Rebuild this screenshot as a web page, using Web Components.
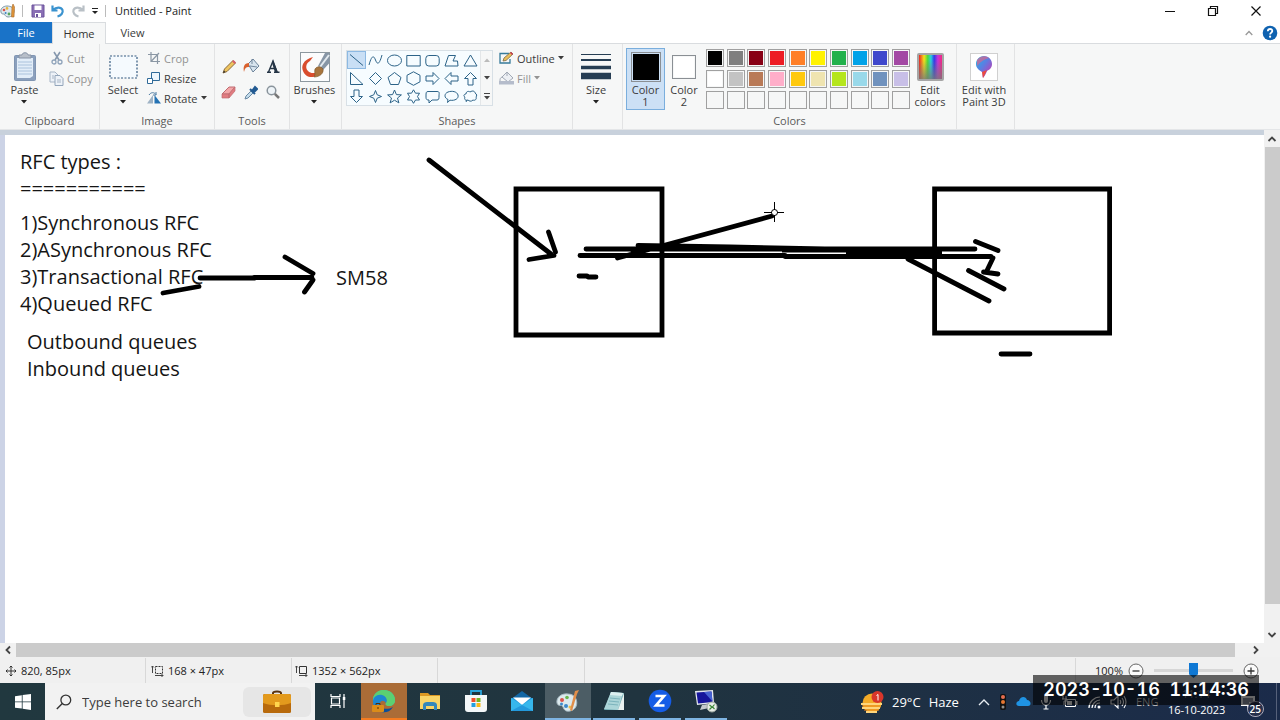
<!DOCTYPE html>
<html lang="en">
<head>
<meta charset="utf-8">
<title>Untitled - Paint</title>
<style>
html,body{margin:0;height:100%}
body{font-family:"Open Sans","Noto Sans",sans-serif;font-size:11px;color:#3b3b3b;overflow:hidden}
</style>
</head>
<body>
<paint-desktop></paint-desktop>
<script>
const ICONS = {
  palette:[16,16,`<path d="M7 3C3 3 0 6 1 9c0 2 2 2 3 2s1 3 4 3c4 0 6-3 6-6S11 3 7 3z" fill="#dfe9ee" stroke="#7f99a6"/><circle cx="4" cy="7" r="1.3" fill="#d9534a"/><circle cx="7" cy="5.4" r="1.3" fill="#e7b63a"/><circle cx="9" cy="11" r="1.4" fill="#5aa65a"/><circle cx="5.6" cy="10" r="1" fill="#3c82c4"/><path d="M13 1l1.500 3-.5 10h-2.500L12 4z" fill="#e0953a" stroke="#a8692a" stroke-width=".6"/>`],
  save:[14,14,`<path d="M1 1h12v12H1z" fill="#8a6fb5" stroke="#6b529b"/><path d="M3.500 1.500h7v4.500h-7z" fill="#fff"/><path d="M4 9h6v4H4z" fill="#fff"/><path d="M5 10h2v3H5z" fill="#6b529b"/>`],
  undo:[14,14,`<path d="M1.500 1.500v5h5M2 6c3-3 8-3.500 9.500 0 1 3-1.500 5.500-5 6.500" fill="none" stroke="#3b93cf" stroke-width="2.200"/>`],
  redo:[14,14,`<path d="M12.500 1.500v5h-5M12 6C9 3 4 2.500 2.500 6c-1 3 1.500 5.500 5 6.500" fill="none" stroke="#b9c0c6" stroke-width="2.200"/>`],
  qat:[8,8,`<path d="M1 1.500h6" stroke="#222"/><path d="M1 4h6L4 7z" fill="#222"/>`],
  caret:[6,4,`<path d="M0 0h6L3 3.500z" fill="currentColor"/>`],
  min:[12,12,`<path d="M1 6.500h10" stroke="#111"/>`],
  restore:[12,12,`<path d="M1.500 3.500h7v7h-7zM3.500 3.500v-2h7v7h-2" fill="none" stroke="#111" stroke-width="1.200"/>`],
  close:[12,12,`<path d="M1.500 1.500l9 9M10.500 1.500l-9 9" stroke="#111" stroke-width="1.200"/>`],
  up:[8,6,`<path d="M.7 5L4 1.500 7.300 5" fill="none" stroke="currentColor" stroke-width="1.300"/>`],
  help:[16,16,`<circle cx="8" cy="8" r="7.300" fill="#0f62b0"/><path d="M5.800 6.200C6 3.200 10.400 3.400 10.300 6c0 1.500-2.200 1.700-2.200 3.500" fill="none" stroke="#fff" stroke-width="1.800"/><circle cx="8.100" cy="11.700" r="1.100" fill="#fff"/>`],
  paste:[24,30,`<rect x="1.500" y="3.500" width="21" height="25" rx="1" fill="#8ba0bd" stroke="#8095b2"/><path d="M4 6h16v18l-3 2H4z" fill="#e2edf8"/><path d="M5 10h14M5 13h14M5 16h14M5 19h14M5 22h14" stroke="#aac2dc"/><path d="M6 6V3h3c0-3 6-3 6 0h3v3z" fill="#b8bfc9" stroke="#8793a5"/>`],
  cut:[12,14,`<path d="M3 1l5 8M9 1L4 9" stroke="#8698ae" stroke-width="1.600"/><circle cx="3" cy="11" r="2" fill="none" stroke="#8fa3ba" stroke-width="1.300"/><circle cx="9" cy="11" r="2" fill="none" stroke="#8fa3ba" stroke-width="1.300"/>`],
  copy:[15,15,`<path d="M1 1h5l3 3v7H1z" fill="#edf2f8" stroke="#a7b5c6"/><path d="M6 4.500h5l3 3v7H6z" fill="#edf2f8" stroke="#94a6bb"/><path d="M3 5h2M3 7h2M8 9h4M8 11h4" stroke="#a7b5c6"/>`],
  select:[29,24,`<rect x="1" y="1" width="27" height="22" fill="#f5fafe" stroke="#345a80" stroke-width="1.200" stroke-dasharray="2 1.500"/>`],
  crop:[12,12,`<path d="M3 0v9.500h9M0 2.500h9.500V12M3.500 9L11 1" fill="none" stroke="#8b97a4" stroke-width="1.200"/>`],
  resize:[13,12,`<path d="M4.500.5h8v8h-8z" fill="#eef6fc" stroke="#2f6a98"/><path d="M.5 6.500h5v5h-5z" fill="#fff" stroke="#2f6a98"/>`],
  rotate:[14,12,`<path d="M0 11.500h6V3z" fill="#9fb3c5"/><path d="M7.500 3v8.500H14z" fill="#2573b4"/><path d="M2 3c2-3 5-3 7-.5M9 0v3H6" fill="none" stroke="#4c7ba2"/>`],
  pencil:[15,15,`<path d="M1 14l1.500-4L11 1.500 13.500 4 5 12.500z" fill="#eec45f" stroke="#8a6a3a"/><path d="M10 2.500L12.500 5 14 3.500 11.500 1z" fill="#d4606a"/><path d="M1 14l1-2.500L3.500 13z" fill="#333"/>`],
  bucket:[17,16,`<path d="M5 6l5-5 6 7-6 6z" fill="#d7e4ee" stroke="#6a8199"/><path d="M9 6V1M7 8l7 1" stroke="#74899e"/><path d="M6 5C1 5 0 9 1 14c1-4 2-5 5-5z" fill="#d9622f"/>`],
  textA:[14,14,`<path d="M1 13.300h4M8 13.300h5.500M2.500 13L7 2l4 11M4.500 9.500h5" fill="none" stroke="#253546" stroke-width="1.400"/><path d="M7 1l5 12.500H9L6 4z" fill="#253546"/>`],
  eraser:[16,14,`<path d="M1 9l7-7h6l-6 7z" fill="#f3a7a9" stroke="#bf6b70"/><path d="M1 9h7v4H1zM8 9l6-7v4l-6 7z" fill="#e17b80" stroke="#bf6b70" stroke-width=".7"/>`],
  picker:[14,15,`<path d="M1 14l1-3 5-5 2 2-5 5z" fill="#c4ddec" stroke="#6988a3"/><path d="M6 4l5 5M8 6l3-4 2 2-3.500 3.500z" fill="#225a92" stroke="#225a92" stroke-width="2"/>`],
  magnify:[14,14,`<circle cx="5.500" cy="5.500" r="4.300" fill="#eef4f8" stroke="#8a949c" stroke-width="1.500"/><path d="M8.800 8.800L13 13" stroke="#777" stroke-width="2.500"/>`],
  brush:[30,30,`<rect x=".5" y=".5" width="29" height="29" fill="#fbfcfd" stroke="#8d989f"/><path d="M3 12C5 8 9 6 13 5l-3 4c-4 2-5 7-2 10 3 3 7 2 9 1l1 3c-6 4-13 2-15-4-1-2-1-5 0-7z" fill="#d94d2e"/><path d="M29.500 2v9l-6.500 7-5-4L25 1h4z" fill="#8796a6"/><path d="M29 3L20 15" stroke="#e3eaef" stroke-width="2"/><path d="M15 17c2-3 6-3 8 0 1 4-3 8-9 8 2-3 0-5 1-8z" fill="#a8753e" stroke="#795428" stroke-width=".6"/>`],
  outline:[15,14,`<path d="M10 2.500H1V12h10V8" fill="none" stroke="#377b9b" stroke-width="1.300"/><path d="M4 10l1-3 7-6 2 2-7 6.500z" fill="#e8bf5b" stroke="#7d6844" stroke-width=".8"/><path d="M11 2l2 2 1-1-2-2z" fill="#c35"/>`],
  fill:[15,14,`<path d="M3 6l5-5 6 6-5 4z" fill="#edf0f4" stroke="#a1a9b5"/><path d="M8 5V1M3 6C1 7 1 8 1 10" stroke="#a1a9b5" fill="none"/><path d="M0 10h15v3.500H0z" fill="#b5bccb"/>`],
  size:[30,28,`<path d="M0 1.500h30" stroke="#263d53"/><path d="M0 7h30" stroke="#263d53" stroke-width="2"/><path d="M0 14.500h30" stroke="#263d53" stroke-width="3.500"/><path d="M0 23h30" stroke="#263d53" stroke-width="6.500"/>`],
  p3d:[28,28,`<defs><linearGradient id="g" x2="1" y2="1"><stop stop-color="#22b7e5"/><stop offset=".45" stop-color="#5c7de2"/><stop offset=".7" stop-color="#9a55c6"/><stop offset="1" stop-color="#ef4a5d"/></linearGradient></defs><rect x=".5" y=".5" width="27" height="27" fill="#fff" stroke="#d0d0d0"/><path d="M14 3c5 0 8 4 8 8s-3 6-5 7c-1 2-2 5-4 7-1-2 0-4-1-6-3-2-6-4-6-8s3-8 8-8z" fill="url(#g)"/><path d="M7 7c3-4 8-5 12-2-4 1-8 3-12 8z" fill="#e86087" opacity=".65"/><path d="M12 19l5-2-4 8z" fill="#ed4b3f"/>`],
  line:[15,15,`<path d="M1 1.500l13 11"/>`],
  curve:[15,15,`<path d="M1 12C4 1 6 3 7.500 7S11 13 14 2"/>`],
  oval:[15,15,`<ellipse cx="7.500" cy="7.500" rx="7" ry="5.500"/>`],
  rect:[15,15,`<path d="M.8 2.500h13.400v10.500H.8z"/>`],
  round:[15,15,`<rect x=".8" y="2.500" width="13.400" height="10.500" rx="3"/>`],
  poly:[15,15,`<path d="M1 13L4.500 2.500h7L9 8h4.500l.5 5z"/>`],
  tri:[15,15,`<path d="M7.500 2L14 13H1z"/>`],
  rtri:[15,15,`<path d="M1.500 1.500V13.500H14z"/>`],
  diamond:[15,15,`<path d="M7.500 1.500l6 6-6 6-6-6z"/>`],
  penta:[15,15,`<path d="M7.500 1.500l6.500 5-2.500 7h-8L1 6.500z"/>`],
  hexa:[15,15,`<path d="M7.500.8l6.500 3.500v6.500l-6.500 3.500L1 10.800V4.300z"/>`],
  arR:[15,15,`<path d="M1 5h7V1.500l6 6-6 6V10H1z"/>`],
  arL:[15,15,`<path d="M14 5H7V1.500l-6 6 6 6V10h7z"/>`],
  arU:[15,15,`<path d="M5 14V7.500H1.500l6-6 6 6H10V14z"/>`],
  arD:[15,15,`<path d="M5 1v6.500H1.500l6 6 6-6H10V1z"/>`],
  star4:[15,15,`<path d="M7.500 1.500L9.200 5.800l4.300 1.700-4.300 1.700-1.700 4.300-1.700-4.300-4.300-1.700 4.300-1.700z"/>`],
  star5:[15,15,`<path d="M7.500 1l1.900 4.600 5 .3-3.900 3.100 1.400 4.900-4.400-2.700-4.400 2.700L4.500 9 .6 5.900l5-.3z"/>`],
  star6:[15,15,`<path d="M7.500.8l2 3.400h4l-2 3.400 2 3.400h-4l-2 3.300-2-3.300h-4l2-3.400-2-3.400h4z"/>`],
  callR:[15,15,`<path d="M3 2.500h9c3 0 2 2 2 4.500s0 4-2 4H7l-3 3v-3C1 11 1 10 1 7s0-4.500 2-4.500z"/>`],
  callO:[15,15,`<path d="M4 10.500C0 9 0 4.500 4 3s9-.5 10 3-3 6-8 5.200L3.500 13.500z"/>`],
  cloud:[15,15,`<path d="M3 5c0-3 3-3 4-2 3-2 5-.5 5 1 2 1 2 3 1 4 1 2-1 4-3 3-2 2-4 1-5 0-3 1-4-1-3-3-2-1-1-3 1-3zM4 11l-1 2"/>`],
  more:[8,9,`<path d="M1 1.500h6" stroke="#444"/><path d="M1 4h6L4 7.500z" fill="#444"/>`],
  move:[12,12,`<path d="M6 1v10M1 6h10M4.500 2.500L6 1l1.500 1.500M4.500 9.500L6 11l1.500-1.500M2.500 4.500L1 6l1.500 1.500M9.500 4.500L11 6 9.500 7.500" fill="none" stroke="#333"/>`],
  selsize:[13,12,`<path d="M1.500 1v7M0 2.500L1.500 1 3 2.500" fill="none" stroke="#444"/><path d="M4.500 1.500h7v7h-7z" fill="none" stroke="#333" stroke-dasharray="2 1"/><path d="M4 10.500h8M10.500 9l1.500 1.500-1.500 1.500" fill="none" stroke="#444"/>`],
  imgsize:[13,12,`<path d="M1.500 1v7M0 2.500L1.500 1 3 2.500" fill="none" stroke="#444"/><path d="M4.500 1.500h7v7h-7z" fill="none" stroke="#333"/><path d="M4 10.500h8M10.500 9l1.500 1.500-1.500 1.500" fill="none" stroke="#444"/>`],
  minus:[16,16,`<circle cx="8" cy="8" r="7" fill="#fafafa" stroke="#666"/><path d="M4.500 8h7" stroke="#333" stroke-width="1.300"/>`],
  plus:[16,16,`<circle cx="8" cy="8" r="7" fill="#fafafa" stroke="#666"/><path d="M4.500 8h7M8 4.500v7" stroke="#333" stroke-width="1.300"/>`],
  win:[16,16,`<path d="M0 2.200l6.800-1v6.300H0zM7.600 1.100L16 0v7.500H7.600zM0 8.300h6.800v6.300L0 13.700zM7.600 8.300H16V16l-8.400-1.200z" fill="#fff"/>`],
  search:[16,16,`<circle cx="9.800" cy="6" r="4.900" fill="none" stroke="#333" stroke-width="1.300"/><path d="M6.300 9.500L.8 15" stroke="#333" stroke-width="1.400"/>`],
  brief:[30,24,`<path d="M11 6V3c0-2 8-2 8 0v3" fill="none" stroke="#5a3310" stroke-width="2"/><rect x="1" y="4" width="28" height="19" rx="1.500" fill="#b86a0c"/><path d="M1 5.500Q1 4 3 4h24q2 0 2 1.500V13c-8 3-20 3-28 0z" fill="#e39a1d"/><path d="M13 12h4.500v5H13z" fill="#ffd54d"/>`],
  taskview:[18,16,`<path d="M2 1v2.500h9V1M2 15v-2.500h9V15M2.500 5h8v6h-8zM15 1v14" fill="none" stroke="#fff" stroke-width="1.200"/><path d="M13.800 4h2.500v3h-2.500z" fill="#fff"/>`],
  edge:[24,24,`<path d="M1 13C0 5 6 1 12 1s11 4 11 10c0 4-3 6-6 6s-4-2-3-3c2-3 0-7-4-7S2 9 1 13z" fill="#3cc3b4"/><path d="M1 9C4 1 10 0 15 1.500 20 3 23 7 23 11c0 4-3 6-6 6s-4-2-3-3C17 8 9 4 1 9z" fill="#5bd072"/><path d="M1 13c0-5 4-8 9-7 4 1 6 5 4 8-2-3-5-3-6 0-1 4 3 7 5 9C6 24 1 19 1 13z" fill="#1d87d2"/><path d="M8 14c-1 5 6 8 13 4-3 5-8 6-11 5s-3-6-2-9z" fill="#0c4f9b"/><rect x="0" y="16" width="12" height="7" rx="1" fill="#db8c19"/><path d="M4 16v-1.500h4V16M5 19h2" stroke="#563006" fill="none"/>`],
  folder:[22,20,`<path d="M1 2h8l2 2h10v4H1z" fill="#dc9822"/><path d="M1 5h20v13H1z" fill="#f9d467"/><path d="M4 19v-5c0-2 2-3 4-3h6c2 0 4 1 4 3v5h-3v-4H7v4z" fill="#3387bb"/>`],
  store:[24,24,`<path d="M7 6V2h10v4" fill="none" stroke="#28a4db" stroke-width="1.800"/><path d="M1 6h22v14q0 3-3 3H4q-3 0-3-3z" fill="#f3f7f8"/><path d="M7.500 9h4v4h-4z" fill="#f04e28"/><path d="M12.500 9h4v4h-4z" fill="#72b522"/><path d="M7.500 14h4v4h-4z" fill="#239fdf"/><path d="M12.500 14h4v4h-4z" fill="#f9b915"/>`],
  mail:[24,22,`<path d="M1 9l11-8 11 8z" fill="#1267a5"/><path d="M1 8h22v13H1z" fill="#2399dc"/><path d="M3 7.500h18L12 15z" fill="#fff"/><path d="M1 8l11 7L1 21zM23 8l-11 7 11 6z" fill="#36b7ec"/>`],
  paintbig:[24,24,`<path d="M12 5C5 4 0 9 1 14c1 4 5 1 6 4s3 5 7 4c6-1 8-7 6-12-1-3-4-5-8-5z" fill="#dce9ed" stroke="#a5b8c0"/><circle cx="6" cy="11" r="2" fill="#d9534a"/><circle cx="11" cy="8.500" r="1.800" fill="#69b64e"/><circle cx="5.500" cy="15" r="1.500" fill="#3b89ca"/><circle cx="10" cy="17" r="2" fill="#3b89ca"/><circle cx="14" cy="18" r="1.500" fill="#edbe44"/><path d="M19 2l4-1-2 4-5 17-2-1z" fill="#e18e4a"/>`],
  notepad:[24,24,`<path d="M9 3l13 1v17L2 21z" fill="#6ca7b0"/><path d="M9 3l12 1-5 17L2 20z" fill="#abd5d8"/><path d="M9 3l12 1-1 3L8 6z" fill="#dceff0"/><path d="M8 9l10 1M7 12l10 1M6 15l10 1" stroke="#7bb3bc"/><path d="M16 21l6-17v17z" fill="#eaf1ef"/>`],
  zoom:[24,24,`<circle cx="12" cy="12" r="11.300" fill="#155ce6"/><path d="M7.500 7h8.500L8 16.500h8.500" fill="none" stroke="#fff" stroke-width="2.700"/>`],
  remote:[24,24,`<path d="M1 2l18-1 1 13-17 2z" fill="#e4e7ed"/><path d="M2.500 3.500L17.500 2.500l1 10.500-14.500 1.500z" fill="#16159b"/><path d="M10 3l7.500-.5 1 10z" fill="#4662d2"/><path d="M8 16l6-1 1 4-9 2z" fill="#c5c9ce"/><circle cx="18" cy="18" r="5" fill="#e9ede8" stroke="#a0a9a1"/><path d="M15.500 16l2.500 2-2.500 2.500M20.500 15.500L18.500 18l2 2" fill="none" stroke="#3c8736" stroke-width="1.200"/>`],
  haze:[24,24,`<circle cx="12" cy="13" r="9.500" fill="#f4ab27"/><path d="M1 14h21M2 18h18M6 22h11" stroke="#ffd57b" stroke-width="2"/><path d="M2 16h18M4 20h15" stroke="#e98920"/><circle cx="17.500" cy="7" r="6" fill="#d9362b"/><path d="M16.500 5.500l1.500-1v6" stroke="#fff" fill="none"/>`],
  chev:[12,8,`<path d="M1 7l5-5 5 5" fill="none" stroke="#e8edf2" stroke-width="1.400"/>`],
  traffic:[8,16,`<rect x="1" y="0" width="6" height="16" rx="2" fill="#111"/><circle cx="4" cy="3" r="2" fill="#e56d4f"/><circle cx="4" cy="8" r="2" fill="#e47732"/><circle cx="4" cy="13" r="1.500" fill="#8c8f90"/>`],
  cloudod:[15,11,`<path d="M3 10C-1 10 0 5 3 5c1-5 7-5 8-1 4 0 5 6 1 6z" fill="#1f93e4"/>`],
  mic:[12,16,`<rect x="4" y="0" width="4" height="9" rx="2" fill="#fff"/><path d="M1.500 6c0 7 9 7 9 0M6 11v4M3.500 15h5" fill="none" stroke="#fff" stroke-width="1.200"/>`],
  battery:[16,12,`<path d="M3.500 3.500h10v7h-10z" fill="none" stroke="#fff"/><path d="M5 5h5v4H5zM14 5h1.500v4H14z" fill="#fff"/><path d="M1 0v3M4 0v3M0 3h5v2H2v4" stroke="#fff" fill="none"/>`],
  wifi:[14,14,`<path d="M2 13C2 7 7 2 13 2M5 13c0-4 4-8 8-8M8 13c0-3 2-5 5-5" fill="none" stroke="#fff" stroke-width="1.200"/><circle cx="12" cy="12" r="1.500" fill="#fff"/>`],
  speaker:[17,14,`<path d="M1 5h3l4-4v12L4 9H1zM10 5q1.500 2 0 4M12 3q3 4 0 8M14 1q4 6 0 12" fill="none" stroke="#fff" stroke-width="1.100"/>`],
  note:[16,14,`<path d="M1 1h14v10h-5l-3 3v-3H1z" fill="#fff"/><path d="M3 4h10M3 6h10M3 8h6" stroke="#2a3550"/>`],
  left:[8,10,`<path d="M6 1.500L2.500 5 6 8.500" fill="none" stroke="#444" stroke-width="1.800"/>`],
  right:[8,10,`<path d="M2 1.500L5.500 5 2 8.500" fill="none" stroke="#444" stroke-width="1.800"/>`],
  sup:[10,8,`<path d="M1.500 6L5 2.500 8.500 6" fill="none" stroke="#444" stroke-width="1.800"/>`],
  sdown:[10,8,`<path d="M1.500 2L5 5.500 8.500 2" fill="none" stroke="#444" stroke-width="1.800"/>`]
};
const BTN = `button{font:inherit;color:inherit;background:none;border:0;padding:0;margin:0}`;
const define = (name, render) => customElements.define(name, class extends HTMLElement {
  constructor(){ super(); this.attachShadow({mode:'open'}); }
  connectedCallback(){ this.shadowRoot.innerHTML = render(this); }
});
const at = (el,n,d='') => el.getAttribute(n) ?? d;

define('ui-icon', el => {
  const [w,h,body] = ICONS[at(el,'name')];
  return `<style>:host{display:block;flex:none;white-space:normal}svg{display:block}</style><svg width="${w}" height="${h}" viewBox="0 0 ${w} ${h}" aria-hidden="true">${body}</svg>`;
});

define('title-bar', () => `<style>${BTN}
:host{display:flex;align-items:center;height:22px;box-sizing:border-box;padding:0 3px 1px 0;background:#fff;color:#222}
.q{display:flex;align-items:center;gap:6px}
.sep{width:1px;height:12px;background:#bbb}
.q button:nth-of-type(1){margin-left:2px}
h1{font-size:11px;font-weight:400;margin:0 auto 0 9px}
.w{display:flex}.w button{width:43px;height:20px;display:grid;place-items:center}
</style>
<div class="q"><ui-icon name="palette"></ui-icon><span class="sep"></span>
<button aria-label="Save"><ui-icon name="save"></ui-icon></button><button aria-label="Undo"><ui-icon name="undo"></ui-icon></button><button aria-label="Redo"><ui-icon name="redo"></ui-icon></button><button aria-label="Customize"><ui-icon name="qat"></ui-icon></button><span class="sep"></span></div>
<h1>Untitled - Paint</h1>
<div class="w"><button aria-label="Minimize"><ui-icon name="min"></ui-icon></button><button aria-label="Restore"><ui-icon name="restore"></ui-icon></button><button aria-label="Close"><ui-icon name="close"></ui-icon></button></div>`);

define('tab-strip', () => `<style>${BTN}
:host{display:flex;height:22px;box-sizing:border-box;background:#fff;border-bottom:1px solid #d9dcdf}
button{width:53px;height:21px;line-height:21px}
.file{background:#1a73c8;color:#fff;width:52px}
.home{height:22px;line-height:20px;background:#f6f7f7;border:solid #d9dcdf;border-width:1px 1px 0;width:54px;color:#333}
.end{margin-left:auto;display:flex;align-items:center;gap:9px;padding-right:2px;color:#999}
.end button{width:auto;height:auto}
</style>
<button class="file">File</button><button class="home">Home</button><button>View</button>
<div class="end"><button aria-label="Collapse ribbon"><ui-icon name="up"></ui-icon></button><button aria-label="Help"><ui-icon name="help"></ui-icon></button></div>`);

define('ribbon-group', el => `<style>
:host{display:grid;grid-template-rows:1fr 16px;box-sizing:border-box;padding-top:4px;border-right:1px solid #e2e3e4}
.c{display:flex;align-items:flex-start}
.l{text-align:center;line-height:16px;color:#5a5a5a}
</style><div class="c"><slot></slot></div><div class="l">${at(el,'label')}</div>`);

define('big-button', el => `<style>${BTN}
:host{display:block;flex:none}
button{width:100%;height:62px;display:grid;grid-template-rows:35px auto;justify-items:center;align-content:start;line-height:12px;border:1px solid transparent;box-sizing:border-box}
:host([active]) button{background:#cce0f5;border-color:#7aaedd}
.i{display:grid;place-items:center;height:35px}
.t{display:flex;flex-direction:column;align-items:center}
:host([wrap]) .t{display:block;width:min-content}
ui-icon{margin-top:4px;color:#222}
.i ui-icon{margin:0}
</style><button><span class="i">${el.hasAttribute('icon')?`<ui-icon name="${at(el,'icon')}"></ui-icon>`:'<slot></slot>'}</span><span class="t">${at(el,'label')}${el.hasAttribute('wrap')?'':'<ui-icon name="caret"></ui-icon>'}</span></button>`);

define('small-button', el => `<style>${BTN}
:host{display:block}
button{height:20px;display:flex;align-items:center;gap:3px;white-space:nowrap}
.i{width:15px;display:grid;place-items:center}
:host([off]) button{color:#939393}
</style><button><span class="i"><ui-icon name="${at(el,'icon')}"></ui-icon></span><span>${at(el,'label')}</span>${el.hasAttribute('menu')?'<ui-icon name="caret"></ui-icon>':''}</button>`);

define('tool-grid', () => `<style>${BTN}
:host{display:grid;grid-template-columns:repeat(3,22px);grid-auto-rows:26px;padding:5px 0 0 3px}
button{display:grid;place-items:center}</style>`
 + [['pencil','Pencil'],['bucket','Fill with color'],['textA','Text'],['eraser','Eraser'],['picker','Color picker'],['magnify','Magnifier']].map(([i,l])=>`<button aria-label="${l}"><ui-icon name="${i}"></ui-icon></button>`).join(''));

define('shape-gallery', () => `<style>${BTN}
:host{display:flex;margin:2px 6px 0 4px;border:1px solid #d8e0e6;background:#f6fcff}
.g{display:grid;grid-template-columns:repeat(7,19px);grid-auto-rows:18px;fill:none;stroke:#2c6388;stroke-width:1px}
.g button{display:grid;place-items:center;box-sizing:border-box}
.g button:first-child{background:#c9dff5;border:1px solid #8db9e2}
.s{display:grid;grid-template-rows:repeat(3,18px);width:11px;background:#f6f7f7;border-left:1px solid #e3e6e8}
.s button{display:grid;place-items:center;color:#444}
.s button:first-child{color:#bbb}.s button:first-child ui-icon{transform:rotate(180deg)}
</style><div class="g">${['line','curve','oval','rect','round','poly','tri','rtri','diamond','penta','hexa','arR','arL','arU','arD','star4','star5','star6','callR','callO','cloud'].map(n=>`<button aria-label="${n}"><ui-icon name="${n}"></ui-icon></button>`).join('')}</div>
<div class="s"><button aria-label="Scroll up"><ui-icon name="caret"></ui-icon></button><button aria-label="Scroll down"><ui-icon name="caret"></ui-icon></button><button aria-label="More shapes"><ui-icon name="more"></ui-icon></button></div>`);

const COLORS = ['#000','#7f7f7f','#880015','#ed1c24','#ff7f27','#fff200','#22b14c','#00a2e8','#3f48cc','#a349a4','#fff','#c3c3c3','#b97a57','#ffaec9','#ffc90e','#efe4b0','#b5e61d','#99d9ea','#7092be','#c8bfe7'];
define('color-palette', () => `<style>${BTN}
:host{display:grid;grid-template-columns:repeat(10,18px);grid-auto-rows:18px;justify-content:space-between;row-gap:3px;width:204px;margin:1px 0 0 3px}
button{border:1px solid #a0a0a0;padding:1px;background-clip:content-box}
</style>` + Array.from({length:30},(_,i)=>`<button aria-label="Palette color ${i+1}" style="background-color:${COLORS[i]||'#f6f7f7'}"></button>`).join(''));

define('color-well', el => `<style>:host{display:block;box-sizing:border-box;border:1px solid #8a8f94;width:${at(el,'size')}px;height:${at(el,'size')}px;padding:1px;background:${at(el,'color')} content-box}</style>`);
define('rainbow-well', () => `<style>:host{display:block;box-sizing:border-box;width:27px;height:28px;border:2px solid #a5a5a5;border-radius:2px;
background:linear-gradient(transparent 20%,#777c),linear-gradient(90deg,#e22 0,#f3e11c 22%,#4bd93b 38%,#2bd0e0 52%,#2f3be8 66%,#c634d9 82%,#f5267c)}</style>`);

define('ribbon-bar', () => `<style>
:host{display:grid;grid-template-columns:100px 115px 75px 52px 231px 50px 334px 58px 1fr;height:86px;background:#f6f7f7;border-bottom:1px solid #e4e6e8;box-sizing:border-box}
.a{width:49px}.b{width:46px}
</style>
<ribbon-group label="Clipboard"><big-button class="a" icon="paste" label="Paste"></big-button><div><small-button off icon="cut" label="Cut"></small-button><small-button off icon="copy" label="Copy"></small-button></div></ribbon-group>
<ribbon-group label="Image"><big-button class="b" icon="select" label="Select"></big-button><div><small-button off icon="crop" label="Crop"></small-button><small-button icon="resize" label="Resize"></small-button><small-button menu icon="rotate" label="Rotate"></small-button></div></ribbon-group>
<ribbon-group label="Tools"><tool-grid></tool-grid></ribbon-group>
<ribbon-group label=""><big-button class="a" icon="brush" label="Brushes"></big-button></ribbon-group>
<ribbon-group label="Shapes"><shape-gallery></shape-gallery><div><small-button menu icon="outline" label="Outline"></small-button><small-button off menu icon="fill" label="Fill"></small-button></div></ribbon-group>
<ribbon-group label=""><big-button class="b" icon="size" label="Size"></big-button></ribbon-group>
<ribbon-group label="Colors"><big-button active wrap label="Color 1" style="width:39px;margin-left:3px"><color-well size="30" color="#000"></color-well></big-button><big-button wrap label="Color 2" style="width:38px"><color-well size="24" color="#fff"></color-well></big-button><color-palette></color-palette><big-button wrap label="Edit colors" style="width:40px"><rainbow-well></rainbow-well></big-button></ribbon-group>
<ribbon-group label=""><big-button wrap icon="p3d" label="Edit&nbsp;with Paint&nbsp;3D" style="width:54px"></big-button></ribbon-group>`);

define('paint-canvas', () => `<style>
:host{display:block;position:relative;overflow:hidden;background:#fff;font:20px/27px "Open Sans","Noto Sans",sans-serif;color:#151515}
p{margin:0;position:absolute;white-space:pre}
svg{position:absolute;inset:0;width:100%;height:100%}
</style>
<p style="left:15px;top:13px">RFC types :
===========</p>
<p style="left:15px;top:74px">1)Synchronous RFC
2)ASynchronous RFC
3)Transactional RFC
4)Queued RFC</p>
<p style="left:22px;top:193px">Outbound queues
Inbound queues</p>
<p style="left:331px;top:129px">SM58</p>
<svg aria-hidden="true"><g transform="translate(-5 -135)" fill="none" stroke="#000" stroke-width="4.800" stroke-linecap="round">
<path d="M200 278H255M254 277.500H312M285 257L313 273.500M313 280L304.500 292M163 293L199 286.500"/>
<path d="M429 160L551 254M548.500 232L555.500 252M554 255.500L529 259.500"/>
<path d="M516 189H662V335H516zM934.600 189H1109.600V333H934.600z" stroke-linecap="butt"/>
<path d="M586 249H975M638 245.500L730 247L850 249.500M580 255.500H785M785 256.500H991M617.500 258L772 216M633 252L650 248"/>
<path d="M782 250.500H942M846 253.500H942" stroke-width="4" stroke-linecap="butt"/>
<path d="M908 259L989 301M975.500 241.500L998 250.500M993 258L987 270.500M983.500 272L998 274M968.500 270.500L1004 289M1001 354H1030M579 276H587M588 277H596"/>
<g stroke-width="1" stroke-linecap="butt"><circle cx="774.500" cy="212.500" r="3" fill="#fff"/><path d="M764 212.500h8M777 212.500h7M774.500 202v8M774.500 215v7"/></g>
</g></svg>`);

define('scroll-bar', el => { const v = el.hasAttribute('vertical'); return `<style>${BTN}
:host{display:flex;flex-direction:${v?'column':'row'};background:#f1f1f1}
button{display:grid;place-items:center;${v?'height:17px':'width:16px'}}
.track{flex:1;display:flex;flex-direction:${v?'column':'row'};padding:${v?'0 0 22px':'0 13px 0 0'}}
.thumb{flex:1;background:#cbcbcb;${v?'margin:0 0 0 1px':''}}
</style><button aria-label="Scroll back"><ui-icon name="${v?'sup':'left'}"></ui-icon></button><div class="track"><div class="thumb"></div></div><button aria-label="Scroll forward"><ui-icon name="${v?'sdown':'right'}"></ui-icon></button>`});

define('work-area', () => `<style>
:host{display:grid;grid-template:1fr 14px / 1fr 16px;min-height:0;background:#f1f1f1}
.desk{display:grid;padding:5px 0 0 5px;background:linear-gradient(#c8d1dc 0 5px,#ccd3e6 5px)}
scroll-bar[vertical]{grid-area:1/2}
</style><div class="desk"><paint-canvas></paint-canvas></div><scroll-bar vertical></scroll-bar><scroll-bar></scroll-bar>`);

define('status-bar', () => `<style>${BTN}
:host{display:grid;grid-template-columns:146px 146px 146px 147px 1fr auto;height:26px;box-sizing:border-box;padding-top:1px;background:#f0f0f0;color:#222}
.c{display:flex;align-items:center;gap:4px;border-right:1px solid #d8d8d8;padding-left:3px}
.c:nth-child(2),.c:nth-child(3){padding-left:5px}
.z{display:flex;align-items:center;gap:5px;padding:0 21px 0 19px}
input{appearance:none;width:79px;height:16px;margin:0 5px;background:linear-gradient(#d6d6d6,#d6d6d6) center/100% 3px no-repeat}
input::-webkit-slider-thumb{appearance:none;width:9px;height:15px;background:#0f78d4;clip-path:polygon(0 0,100% 0,100% 75%,50% 100%,0 75%)}
</style><div class="c"><ui-icon name="move"></ui-icon><span>820, 85px</span></div><div class="c"><ui-icon name="selsize"></ui-icon><span>168 × 47px</span></div><div class="c"><ui-icon name="imgsize"></ui-icon><span>1352 × 562px</span></div><div class="c"></div><div class="c"></div>
<div class="z"><span>100%</span><button aria-label="Zoom out"><ui-icon name="minus"></ui-icon></button><input type="range" aria-label="Zoom" value="50"><button aria-label="Zoom in"><ui-icon name="plus"></ui-icon></button></div>`);

define('task-tile', el => `<style>${BTN}
:host{display:block;width:46px;flex:none}
button{width:100%;height:100%;display:grid;place-items:center;box-sizing:border-box;border-bottom:2px solid transparent}
:host([open]) button{border-image:linear-gradient(90deg,transparent 4px,#7eb4e2 4px calc(100% - 4px),transparent 0) 2}
:host([current]) button{background:#4c5d65;border-bottom-color:#7eb4e2}
:host([alert]) button{background:#aa6c37;border-bottom-color:#f47b20}
</style><button aria-label="${at(el,'label')}"><ui-icon name="${at(el,'icon')}"></ui-icon></button>`);

define('task-bar', () => `<style>${BTN}
:host{display:flex;height:37px;background:linear-gradient(90deg,#21383f,#20343f 50%,#1b2b4a);color:#fff}
.s{width:45px;display:grid;place-items:center}
.search{display:flex;align-items:center;width:270px;background:#f2f2f2;box-sizing:border-box;padding:0 4px 0 11px;gap:10px}
input{flex:1;min-width:0;border:0;background:none;padding:0;font:13px "Open Sans",sans-serif;outline:0}
input::placeholder{color:#3c3c3c;opacity:1}
.art{width:68px;height:30px;border-radius:6px;background:#e6e6e6;display:grid;place-items:center}
.tray{margin-left:auto;display:flex;align-items:center;padding-right:3px}
.wx{display:flex;align-items:center;font-size:13px;gap:8px;width:118px;white-space:nowrap}
.ic{display:flex;align-items:center;justify-content:space-between;width:149px;margin-right:9px}
.eng{width:32px;color:#ccc}
.clock{line-height:16px;text-align:center;width:56px;white-space:nowrap}
.clock div:first-child{color:#888}
.n{display:grid;margin:0 12px 0 16px;align-items:center;width:24px}
.n>*{grid-area:1/1;justify-self:start}
.n span{justify-self:end;font-size:10px;font-weight:600;line-height:14px;border:1px solid #aab;border-radius:8px;background:#26304b;padding:0 2px;margin-top:14px}
.peek{width:1px;height:37px;background:#56617a}
</style><button class="s" aria-label="Start"><ui-icon name="win"></ui-icon></button>
<label class="search"><ui-icon name="search"></ui-icon><input type="text" aria-label="Search" placeholder="Type here to search"><span class="art"><ui-icon name="brief"></ui-icon></span></label>
<task-tile icon="taskview" label="Task view"></task-tile><task-tile alert icon="edge" label="Edge"></task-tile><task-tile icon="folder" label="Explorer"></task-tile><task-tile icon="store" label="Store"></task-tile><task-tile icon="mail" label="Mail"></task-tile><task-tile current icon="paintbig" label="Paint"></task-tile><task-tile open icon="notepad" label="Notepad"></task-tile><task-tile open icon="zoom" label="Zoom"></task-tile><task-tile open icon="remote" label="Remote desktop"></task-tile>
<div class="tray"><div class="wx"><ui-icon name="haze"></ui-icon><span>29°C</span><span>Haze</span></div>
<div class="ic"><ui-icon name="chev"></ui-icon><ui-icon name="traffic"></ui-icon><ui-icon name="cloudod"></ui-icon><ui-icon name="mic"></ui-icon><ui-icon name="battery"></ui-icon><ui-icon name="wifi"></ui-icon><ui-icon name="speaker"></ui-icon></div><span class="eng">ENG</span>
<div class="clock"><div>11:14</div><div>16-10-2023</div></div><div class="n"><ui-icon name="note"></ui-icon><span>25</span></div><div class="peek"></div></div>`);

define('time-stamp', () => `<style>
:host{display:block;background:rgba(0,0,0,.6);color:#fff;font:600 18px/30px Inter,sans-serif;font-variant-numeric:tabular-nums;padding:0 10px;white-space:pre}
</style><slot></slot>`);

define('paint-desktop', () => `<style>
:host{display:grid;grid-template-rows:auto auto auto 1fr auto auto;height:100vh;position:relative}
time-stamp{position:absolute;right:21px;bottom:15px}
</style><title-bar></title-bar><tab-strip></tab-strip><ribbon-bar></ribbon-bar><work-area></work-area><status-bar></status-bar><task-bar></task-bar><time-stamp>2023-10-16  11:14:36</time-stamp>`);
</script>
</body>
</html>
